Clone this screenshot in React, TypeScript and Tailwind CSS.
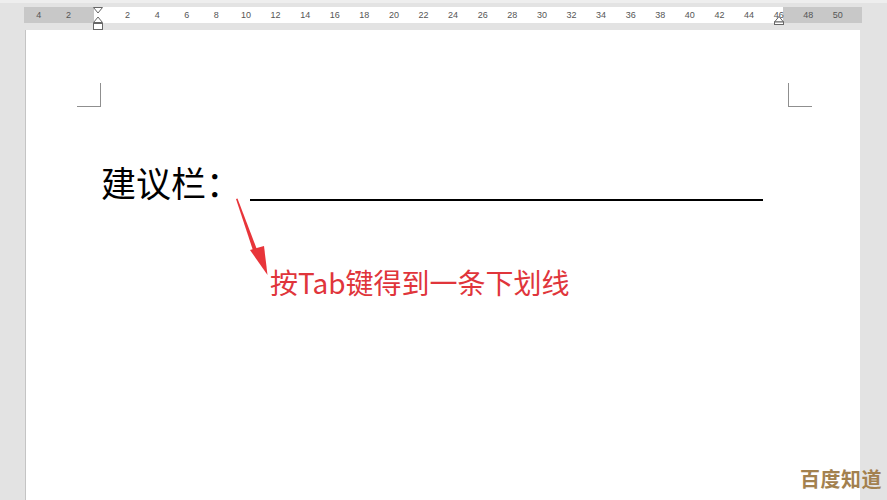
import React from 'react';

const cjk = { fontFamily: '"Noto Sans CJK SC", "Noto Sans", sans-serif' };

// ruler labels, one cell per 2cm step; null = the first-line indent marker
const labels: (number | null)[] = [4, 2, null];
for (let n = 2; n <= 50; n += 2) labels.push(n);

function Ruler() {
  return (
    <div className="relative ml-[24px] mt-[4px] flex h-[16px] w-[838px] bg-white">
      <div className="absolute left-0 top-0 h-full w-[70px] bg-[#c8c8c8]" />
      <div className="absolute right-0 top-0 h-full w-[79px] bg-[#c8c8c8]" />
      {labels.map((n, i) => (
        <div
          key={i}
          className="relative flex w-[29.6px] shrink-0 items-center justify-center text-[9px] leading-none text-[#555]"
          style={{ fontFamily: '"Liberation Sans", sans-serif' }}
        >
          {n === null ? '' : n}
        </div>
      ))}
      {/* first line / hanging indent marker */}
      <svg className="absolute left-[68px] top-0" width="12" height="24" viewBox="0 0 12 24">
        <path d="M1.5 0.5 H10.5 L6 6 Z" fill="#fff" stroke="#666" />
        <path d="M6 10 L10.5 15.5 H1.5 Z" fill="#fff" stroke="#666" />
        <rect x="1.5" y="16.5" width="9" height="6" fill="#fff" stroke="#666" />
      </svg>
      {/* right indent marker */}
      <svg className="absolute left-[749px] top-[9px]" width="12" height="9" viewBox="0 0 12 9">
        <path d="M6 0.5 L10.5 6 H1.5 Z" fill="#fff" stroke="#666" />
        <rect x="1.5" y="6" width="9" height="2.5" fill="#fff" stroke="#666" />
      </svg>
    </div>
  );
}

export default function App() {
  return (
    <div className="relative h-[500px] w-[887px] overflow-hidden bg-[#e3e3e3]">
      <div className="h-[3px] bg-[#eeeeee]" />
      <Ruler />
      <div className="relative ml-[25px] mt-[7px] h-[480px] w-[835px] border-l border-[#c4c4c4] bg-white">
        <div className="flex justify-between pl-[51px] pr-[48px] pt-[53px]">
          <div className="h-[24px] w-[24px] border-b border-r border-[#8f8f8f]" />
          <div className="h-[24px] w-[24px] border-b border-l border-[#8f8f8f]" />
        </div>

        <div className="ml-[75px] mt-[56px] flex items-start text-[35px] leading-[38px] text-black" style={cjk}>
          <span>建议栏：</span>
          <span className="ml-[9px] mt-[36px] inline-block h-[2px] w-[513px] bg-black" />
        </div>

        <div className="ml-[244px] mt-[65px] text-[28px] leading-[32px] text-[#e0353b]" style={cjk}>
          按Tab键得到一条下划线
        </div>

        {/* arrow */}
        <svg className="absolute left-[205px] top-[165px]" width="40" height="85" viewBox="0 0 40 85">
          <path d="M5 4 L6.5 3.5 L28 60 L24 61.5 Z" fill="#e8353a" />
          <path d="M19 55 L33 51 L36.5 80 Z" fill="#e8353a" />
        </svg>
      </div>

      <div
        className="absolute left-[800px] top-[469px] text-[20px] font-bold leading-none tracking-[0.5px] text-[#a3814f]"
        style={cjk}
      >
        百度知道
      </div>
    </div>
  );
}
